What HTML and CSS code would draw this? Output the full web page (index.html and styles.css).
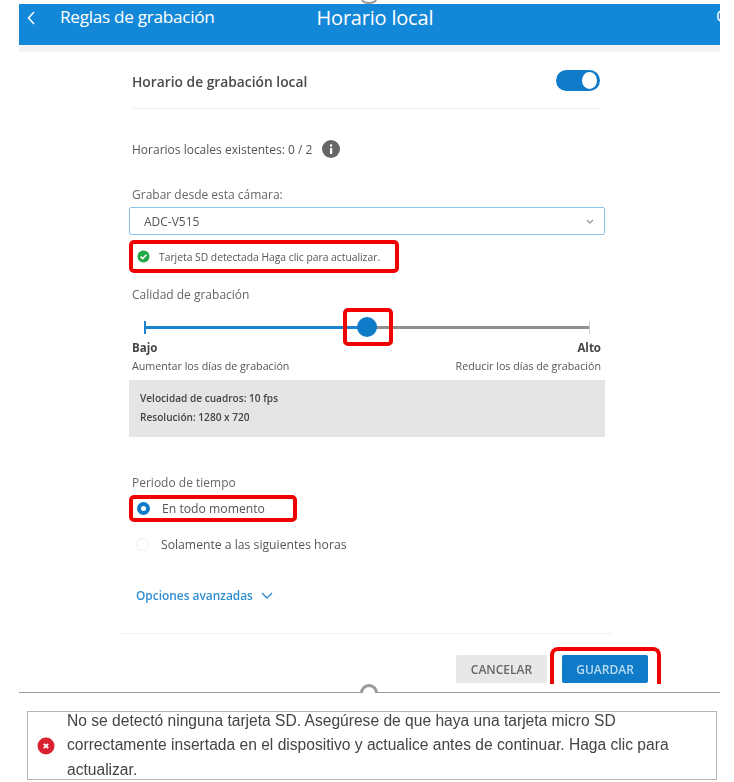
FILE: index.html
```html
<!DOCTYPE html>
<html lang="es">
<head>
    <meta charset="UTF-8">
    <meta name="viewport" content="width=device-width, initial-scale=1.0">
    <title>Horario local</title>
    <link rel="stylesheet" href="styles.css">
</head>
<body>
    <div class="shot">
        <span class="top-handle"></span>
        <div class="topbar">
            <svg class="back" width="10" height="16" viewBox="0 0 10 16"><path d="M8 2 L2.5 8 L8 14" fill="none" stroke="#fff" stroke-width="1.5"/></svg>
            <span class="back-label">Reglas de grabación</span>
            <span class="title">Horario local</span>
            <span class="cut">C</span>
        </div>
        <div class="strip"></div>

        <div class="panel">
            <div class="head">
                <span class="head-label">Horario de grabación local</span>
                <span class="toggle"><span class="knob"></span></span>
            </div>

            <div class="existing">
                <span>Horarios locales existentes: 0 / 2</span>
                <svg width="18" height="18" viewBox="0 0 18 18"><circle cx="9" cy="9" r="9" fill="#666"/><rect x="8" y="8" width="2.2" height="6" fill="#fff"/><rect x="8" y="4.4" width="2.2" height="2.2" fill="#fff"/></svg>
            </div>

            <div class="field-label">Grabar desde esta cámara:</div>
            <div class="select">
                <span>ADC-V515</span>
                <svg width="8" height="5" viewBox="0 0 8 5"><path d="M1 1 L4 4 L7 1" fill="none" stroke="#999" stroke-width="1.3"/></svg>
            </div>

            <div class="sd-row red">
                <svg width="13" height="13" viewBox="0 0 13 13"><circle cx="6.5" cy="6.5" r="6" fill="#22a845"/><path d="M3.6 6.6 L5.7 8.6 L9.4 4.7" fill="none" stroke="#fff" stroke-width="1.6"/></svg>
                <span>Tarjeta SD detectada Haga clic para actualizar.</span>
            </div>

            <div class="field-label quality">Calidad de grabación</div>
            <div class="slider">
                <span class="tick tick-low"></span>
                <span class="track-on"></span>
                <span class="track-off"></span>
                <span class="tick tick-high"></span>
                <span class="thumb"></span>
                <span class="thumb-mark red"></span>
            </div>
            <div class="scale">
                <b>Bajo</b>
                <b>Alto</b>
            </div>
            <div class="scale scale-sub">
                <span>Aumentar los días de grabación</span>
                <span>Reducir los días de grabación</span>
            </div>
            <div class="specs">
                <div>Velocidad de cuadros: 10 fps</div>
                <div>Resolución: 1280 x 720</div>
            </div>

            <div class="field-label period">Periodo de tiempo</div>
            <div class="radio-row red">
                <span class="radio on"></span>
                <span>En todo momento</span>
            </div>
            <div class="radio-row plain">
                <span class="radio"></span>
                <span>Solamente a las siguientes horas</span>
            </div>

            <div class="advanced">
                <span>Opciones avanzadas</span>
                <svg width="12" height="7" viewBox="0 0 12 7"><path d="M1 1 L6 6 L11 1" fill="none" stroke="#2f8dd0" stroke-width="1.4"/></svg>
            </div>

            <div class="rule"></div>
            <div class="actions">
                <button class="btn btn-cancel">CANCELAR</button>
                <div class="save-wrap">
                    <button class="btn btn-save">GUARDAR</button>
                </div>
            </div>
        </div>

        <div class="divider"><span class="handle"></span></div>
    </div>

    <div class="notice">
        <svg width="18" height="18" viewBox="0 0 18 18"><circle cx="9" cy="9" r="8.5" fill="#d92130"/><path d="M6.8 6.8 L11.2 11.2 M11.2 6.8 L6.8 11.2" stroke="#fff" stroke-width="1.8"/></svg>
        <p>No se detectó ninguna tarjeta SD. Asegúrese de que haya una tarjeta micro SD correctamente insertada en el dispositivo y actualice antes de continuar. Haga clic para actualizar.</p>
    </div>
</body>
</html>
```

FILE: styles.css
```css
body {
    margin: 0;
    height: 782px;
    overflow: hidden;
    background-color: #fff;
    font-family: "Open Sans", sans-serif;
    color: #555;
}
.shot {
    position: relative;
    margin-left: 19px;
    width: 701px;
    padding-top: 4px;
    filter: blur(0.4px);
}
.top-handle {
    position: absolute;
    left: 342px;
    top: -5px;
    width: 16px;
    height: 9px;
    box-sizing: border-box;
    border: 2px solid #999;
    border-radius: 50%;
}
.topbar {
    height: 41px;
    background-color: #1488d8;
    color: #fff;
    position: relative;
    display: flex;
    align-items: flex-start;
    overflow: hidden;
}
.back {
    margin: 6px 0 0 7px;
}
.back-label {
    margin-left: 24px;
    margin-top: 1px;
    font-size: 17.2px;
    letter-spacing: -0.3px;
}
.title {
    margin-left: 102px;
    font-size: 20px;
    letter-spacing: -0.2px;
}
.cut {
    position: absolute;
    right: -6px;
    top: 1px;
    font-size: 16px;
}
.strip {
    height: 7px;
    background-color: #f3f3f3;
}
.panel {
    margin-left: 110px;
    width: 476px;
    position: relative;
}
.head {
    display: flex;
    justify-content: space-between;
    align-items: center;
    margin-left: 3px;
    width: 469px;
    height: 56px;
    border-bottom: 1px solid #f0f0f0;
}
.head-label {
    font-size: 13.8px;
    font-weight: 600;
    color: #4a4a4a;
    margin-top: 3px;
}
.toggle {
    width: 44px;
    height: 21px;
    margin: 0 1px 0 0;
    border-radius: 11px;
    background-color: #0f7bc8;
    display: flex;
    justify-content: flex-end;
    align-items: center;
    padding-right: 3px;
    box-sizing: border-box;
}
.knob {
    width: 15px;
    height: 17px;
    border-radius: 50%;
    background-color: #fff;
}
.existing {
    display: flex;
    align-items: center;
    gap: 10px;
    margin: 30px 0 0 3px;
    height: 20px;
    font-size: 12px;
}
.field-label {
    font-size: 12px;
    margin: 28px 0 0 3px;
    line-height: 16px;
    color: #666;
}
.select {
    display: flex;
    justify-content: space-between;
    align-items: center;
    box-sizing: border-box;
    height: 28px;
    margin-top: 4px;
    padding: 0 10px 0 14px;
    border: 1px solid #8cc4ea;
    border-radius: 2px;
    font-size: 12px;
}
.red {
    border: 4px solid #f00000;
    border-radius: 5px;
    box-sizing: border-box;
}
.sd-row {
    display: inline-flex;
    align-items: center;
    gap: 9px;
    width: 270px;
    height: 33px;
    margin-top: 5px;
    padding-left: 4px;
    font-size: 10.3px;
    vertical-align: top;
}
.field-label.quality {
    margin-top: 14px;
}
.slider {
    position: relative;
    height: 24px;
    margin: 12px 0 0 15px;
    width: 446px;
}
.track-on {
    position: absolute;
    left: 0;
    top: 11px;
    width: 222px;
    height: 3px;
    background-color: #1a82cf;
}
.track-off {
    position: absolute;
    left: 222px;
    right: 0;
    top: 11px;
    height: 3px;
    background-color: #909090;
}
.tick {
    position: absolute;
    top: 6px;
    width: 2px;
    height: 13px;
}
.tick-low {
    left: 0;
    background-color: #1a82cf;
}
.tick-high {
    right: 0;
    width: 1px;
    background-color: #ccc;
}
.thumb {
    position: absolute;
    left: 213px;
    top: 2px;
    width: 20px;
    height: 20px;
    border-radius: 50%;
    background-color: #0f7bc8;
}
.thumb-mark {
    position: absolute;
    left: 199px;
    top: -7px;
    width: 50px;
    height: 38px;
}
.scale {
    display: flex;
    justify-content: space-between;
    margin: 2px 4px 0 3px;
    font-size: 11.5px;
    line-height: 14px;
    color: #444;
}
.scale-sub {
    margin-top: 4px;
    font-size: 10.7px;
    font-weight: 400;
    color: #555;
}
.specs {
    margin-top: 7px;
    height: 57px;
    padding: 9px 11px 0;
    box-sizing: border-box;
    background-color: #e5e5e5;
    font-size: 10.1px;
    font-weight: 600;
    line-height: 19px;
    color: #444;
}
.field-label.period {
    margin-top: 38px;
}
.radio-row {
    display: flex;
    align-items: center;
    gap: 12px;
    font-size: 12.2px;
}
.radio-row.red {
    width: 168px;
    height: 27px;
    margin-top: 4px;
    padding-left: 4px;
}
.radio-row.plain {
    margin-top: 10px;
    height: 24px;
    padding-left: 7px;
}
.radio {
    width: 13px;
    height: 13px;
    box-sizing: border-box;
    border: 1px solid #eee;
    border-radius: 50%;
    background-color: #fff;
}
.radio.on {
    border: 4px solid #0f7bc8;
}
.advanced {
    display: flex;
    align-items: center;
    gap: 8px;
    margin: 31px 0 0 7px;
    height: 16px;
    font-size: 11.9px;
    font-weight: 600;
    color: #2f8dd0;
}
.rule {
    margin: 30px 0 0 -8px;
    width: 491px;
    height: 1px;
    background-color: #f0f0f0;
}
.actions {
    display: flex;
    align-items: flex-end;
    gap: 3px;
    margin-right: -60px;
    padding: 13px 0 0 327px;
}
.btn {
    height: 28px;
    border: 0;
    border-radius: 2px;
    font-family: inherit;
    font-size: 12px;
    font-weight: 600;
    padding: 0;
}
.btn-cancel {
    width: 91px;
    margin-bottom: 1px;
    background-color: #e8e8e8;
    color: #666;
}
.btn-save {
    width: 86px;
    background-color: #0f7bc8;
    color: #b9dcf2;
}
.save-wrap {
    box-sizing: border-box;
    width: 111px;
    height: 37px;
    padding: 4px 0 0 8px;
    border: 4px solid #f00000;
    border-bottom: 0;
    border-radius: 8px 8px 0 0;
}
.divider {
    position: relative;
    height: 1px;
    margin-top: 8px;
    background-color: #999;
}
.handle {
    position: absolute;
    left: 341px;
    top: -8px;
    width: 18px;
    height: 9px;
    box-sizing: border-box;
    border: 3px solid #999;
    border-bottom: 0;
    border-radius: 9px 9px 0 0;
    background-color: #fff;
}
.notice {
    display: flex;
    align-items: center;
    gap: 12px;
    box-sizing: border-box;
    width: 690px;
    height: 69px;
    margin: 18px 0 0 27px;
    padding-left: 9px;
    border: 1px solid #b5b5b5;
    font-family: "Liberation Sans", sans-serif;
    font-size: 15.6px;
    line-height: 24.5px;
    color: #444;
    filter: blur(0.4px);
}
.notice p {
    margin: 0;
    width: 612px;
}
```
